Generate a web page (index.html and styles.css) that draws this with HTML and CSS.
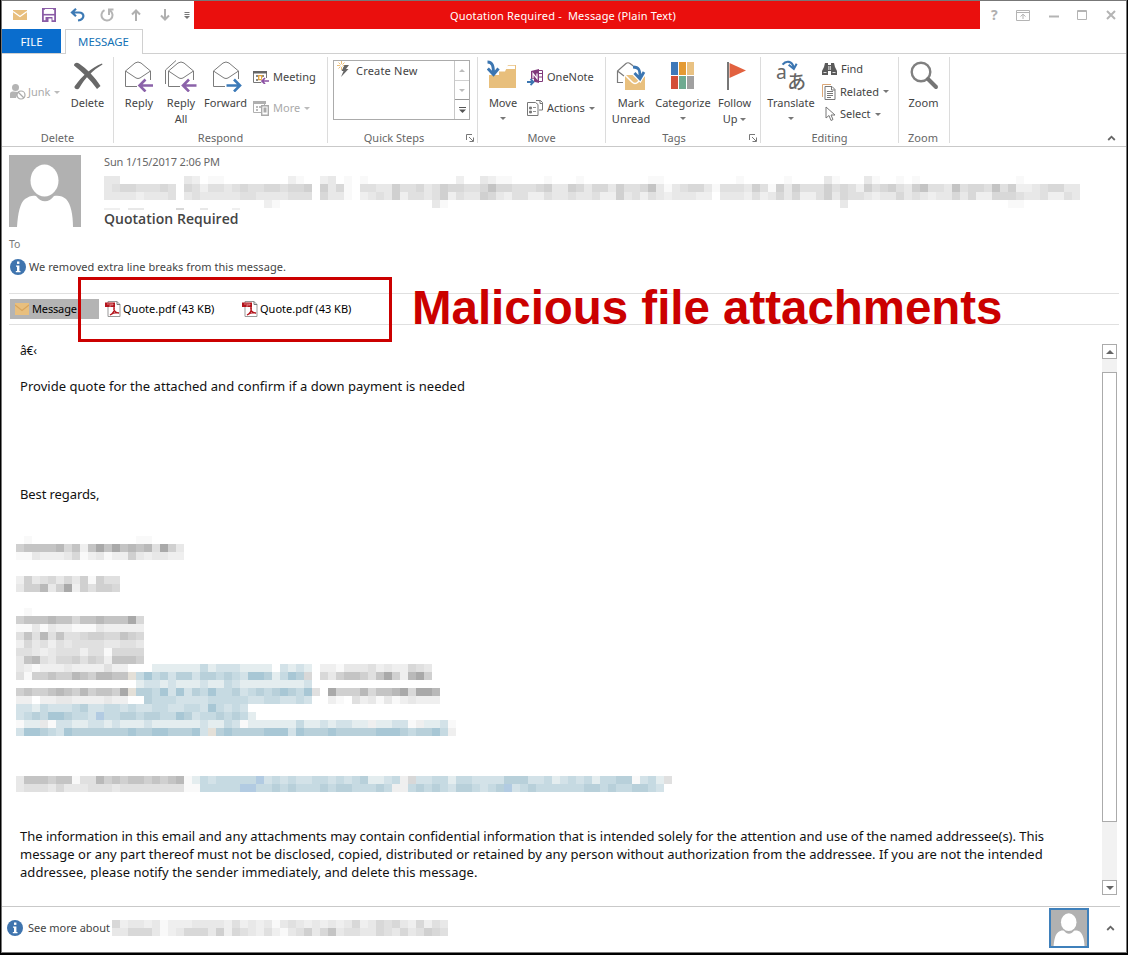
FILE: index.html
```html
<!DOCTYPE html>
<html lang="en">
<head>
<meta charset="utf-8">
<title>Quotation Required - Message</title>
<link rel="stylesheet" href="styles.css">
</head>
<body>
<svg class="defs" width="0" height="0">
  <symbol id="person" viewBox="0 0 72 72">
    <rect width="72" height="72" fill="#b1b1b1"/>
    <path d="M8 72 C9 58 11 48 16 44 C20 41 24 40 27 41 C32 48 40 48 45 41 C49 40 54 41 57 44 C62 49 64 60 64 72Z" fill="#fff"/>
    <ellipse cx="35.500" cy="25.500" rx="14" ry="16" fill="#fff"/>
  </symbol>
  <symbol id="info" viewBox="0 0 16 16">
    <circle cx="8" cy="8" r="8" fill="#3f74ae"/><rect x="7" y="2.500" width="2.400" height="2.400" fill="#fff"/>
    <path d="M6 6.500h3.400v5.500h1.100v1.200H5.800V12h1.200V7.700H6z" fill="#fff"/>
  </symbol>
  <symbol id="pdf" viewBox="0 0 16 16">
    <path d="M3 .5h9l3 3v12H3z" fill="#fff" stroke="#999"/><path d="M12 .5v3h3" fill="none" stroke="#777"/>
    <path d="M0 1.500h10v4.500H0z" fill="#b3141c"/><path d="M2 3h6v1H5v2" fill="none" stroke="#e9a9ab" stroke-width=".7"/>
    <path d="M5 14c3-1 5-5 4-8-1 4 2 6 5 6-3-1-6 0-9 2z" fill="none" stroke="#b3141c" stroke-width="1.300"/>
  </symbol>
  <symbol id="launch" viewBox="0 0 8 8"><path d="M.5 6V.5H6M3 3l4 4M7.500 3.500v4h-4" fill="none" stroke="#777"/></symbol>
  <symbol id="chev" viewBox="0 0 8 6"><path d="M.7 5 4 1.700 7.300 5" fill="none" stroke="#666" stroke-width="1.800"/></symbol>
</svg>

<div class="window">
  <header class="titlebar">
    <div class="quick">
      <svg width="14" height="12" viewBox="0 0 14 12"><path d="M0 1h14v10H0z" fill="#e8bf7e"/><path d="M0 2.500 7 7.500 14 2.500" fill="none" stroke="#fff" stroke-width="1.300"/></svg>
      <svg width="14" height="14" viewBox="0 0 14 14"><path d="M.9.9h12.200v12.200H.9z" fill="#fff" stroke="#8a5ca6" stroke-width="1.800"/><path d="M3 1h8v5H3z" fill="#fff"/><path d="M1 6.700h12" stroke="#8a5ca6" stroke-width="1.600"/><path d="M3.500 9h7v5h-7z" fill="#8a5ca6"/><path d="M6.500 10.500h3V14h-3z" fill="#fff"/></svg>
      <svg width="15" height="14" viewBox="0 0 15 14"><path d="M6 .8 2 4.500l4 3.700M2 4.500h7c6 0 6 7-1 8" fill="none" stroke="#3d7ab5" stroke-width="2.200"/></svg>
      <svg width="14" height="14" viewBox="0 0 14 14"><path d="M4.500 2.200A5.500 5.500 0 1 0 10 2.500M9 7V1.500h4.500" fill="none" stroke="#b5b5b5" stroke-width="2"/></svg>
      <svg width="10" height="12" viewBox="0 0 10 12"><path d="M5 12V1.500M1 5.500l4-4 4 4" fill="none" stroke="#b0b0b0" stroke-width="2"/></svg>
      <svg width="10" height="12" viewBox="0 0 10 12"><path d="M5 0v10.500M1 6.500l4 4 4-4" fill="none" stroke="#b0b0b0" stroke-width="2"/></svg>
      <svg width="6" height="7" viewBox="0 0 6 7"><path d="M.5 .5h5M.5 2.500h5" stroke="#777"/><path d="M0 4h6L3 7z" fill="#777"/></svg>
    </div>
    <div class="caption-bar">Quotation Required -&nbsp; Message (Plain Text)</div>
    <div class="controls">
      <b>?</b>
      <svg width="14" height="11" viewBox="0 0 14 11"><path d="M.5.500h13v10H.5zM.5 2.500h13M7 9V4.500M4.500 6.500 7 4.200l2.500 2.300" fill="none" stroke="#b4b4b4"/></svg>
      <svg width="10" height="10" viewBox="0 0 10 10"><path d="M0 6.500h10" stroke="#b4b4b4" stroke-width="2"/></svg>
      <svg width="10" height="10" viewBox="0 0 10 10"><path d="M.5.500h9v9h-9zM0 1.500h10" fill="none" stroke="#b4b4b4"/></svg>
      <svg width="10" height="10" viewBox="0 0 10 10"><path d="M1 1l8 8M9 1 1 9" stroke="#b4b4b4" stroke-width="2"/></svg>
    </div>
  </header>

  <nav class="tabs"><span class="file">FILE</span><span class="active">MESSAGE</span></nav>

  <section class="ribbon">
    <div class="group g-delete">
      <div class="tools">
        <div class="small junk dim">
          <svg width="16" height="16" viewBox="0 0 16 16"><circle cx="5.500" cy="3.500" r="3.500" fill="#b4b4b4"/><path d="M0 14V9.500C0 7 4 7 8 8L6 14z" fill="#b4b4b4"/><circle cx="11" cy="11" r="4" fill="#fff" stroke="#aaa" stroke-width="1.200"/><path d="m8 8 6 6" stroke="#aaa" stroke-width="1.200"/></svg>
          <span>Junk</span><i class="arrow"></i>
        </div>
        <div class="big w-delete">
          <svg width="32" height="32" viewBox="0 0 32 32"><path d="M2 5.500C2 3 5 2 7 3.500 15 9 23 17 28.500 26L25 29C18 19 10 12 2 5.500z" fill="#686868"/><path d="M30.500 4.500C21 10 13 18 7 28.500 5.500 30 2 29 2.500 26.500 10 16 19 8 30 3.500z" fill="#686868"/></svg>
          <span>Delete</span>
        </div>
      </div>
      <footer>Delete</footer>
    </div>

    <div class="group g-respond">
      <div class="tools">
        <div class="big w-reply">
          <svg width="32" height="32" viewBox="0 0 32 32"><path d="M14 26.500H2.500V11L12 3q3-2 6 0l9.500 8v9M2.500 11 13 18q2 1 4 0L27.500 11" fill="none" stroke="#7b7b7b"/><path d="M30 25.500H17M22.500 19.500l-6 6 6 6" fill="none" stroke="#8b62a9" stroke-width="2.600"/></svg>
          <span>Reply</span>
        </div>
        <div class="big w-replyall">
          <svg width="34" height="32" viewBox="0 0 34 32"><path d="M1.500 24V10L12 .5M16 26.500H4.500V11L14 3q3-2 6 0l9.500 8v9M4.500 11 15 18q2 1 4 0L29.500 11" fill="none" stroke="#7b7b7b"/><path d="M32.500 25.500h-13M25 19.500l-6 6 6 6" fill="none" stroke="#8b62a9" stroke-width="2.600"/></svg>
          <span>Reply<br>All</span>
        </div>
        <div class="big w-forward">
          <svg width="32" height="32" viewBox="0 0 32 32"><path d="M15 26.500H3.500V11L13 3q3-2 6 0l9.500 8v8M3.500 11 14 18q2 1 4 0L28.500 11" fill="none" stroke="#7b7b7b"/><path d="M16.500 25.500h13M24 19.500l6 6-6 6" fill="none" stroke="#3c7ab8" stroke-width="2.600"/></svg>
          <span>Forward</span>
        </div>
        <div class="stack two">
          <div class="small">
            <svg width="16" height="14" viewBox="0 0 16 14"><path d="M.5 1.500h13v11H.5z" fill="#fff" stroke="#777"/><path d="M0 1h14v2.500H0z" fill="#666"/><path d="M3 5h2v2H3zM9 5h2v2H9zM3 9h2v2H3z" fill="#888"/><path d="M5.700 5.700h3v4h-3z" fill="#fff" stroke="#e3a43d" stroke-width="1.300"/><path d="M9 8h7v6H8z" fill="#fff"/><path d="M16 11H9M12 8l-3 3 3 3" fill="none" stroke="#8b4fa3" stroke-width="1.700"/></svg>
            <span>Meeting</span>
          </div>
          <div class="small dim">
            <svg width="16" height="15" viewBox="0 0 16 15"><path d="M.5.500h11v11H.5z" fill="#fff" stroke="#b0b0b0"/><path d="M0 0h13v3H0z" fill="#b0b0b0"/><path d="M3 5h2v2H3zM6 5h2v2H6zM3 8h2v2H3z" fill="#bbb"/><path d="M8.700 4.700h6.600v9.600H8.700z" fill="#fff" stroke="#aaa" stroke-width="1.400"/><path d="M10.500 6.500h3v5h-3z" fill="#aaa"/></svg>
            <span>More</span><i class="arrow"></i>
          </div>
        </div>
      </div>
      <footer>Respond</footer>
    </div>

    <div class="group g-quick">
      <div class="tools">
        <div class="gallery">
          <div class="step">
            <svg width="16" height="18" viewBox="0 0 16 18"><path d="M4.500 0v9M0 4.500h9M1.500 1.500l6 6M7.500 1.500l-6 6" stroke="#eab86a" stroke-width=".9"/><circle cx="4.500" cy="4.500" r="1.500" fill="#fff"/><path d="M7.500 4h4.500l-3 4h2.500L4 16l2.500-6H4.500z" fill="#666"/></svg>
            <span>Create New</span>
          </div>
          <div class="scroller"><u class="up faint"></u><u class="down faint"></u><u class="more"><svg width="7" height="6" viewBox="0 0 7 6"><path d="M0 .5h7" stroke="#555"/><path d="M0 2.500h7L3.500 6z" fill="#555"/></svg></u></div>
        </div>
      </div>
      <footer>Quick Steps<svg class="launcher" width="8" height="8"><use href="#launch"/></svg></footer>
    </div>

    <div class="group g-move">
      <div class="tools">
        <div class="big w-move">
          <svg width="32" height="32" viewBox="0 0 32 32"><path d="M2 11.500h16l3-6.500h8v23H2z" fill="#e8bf7c"/><path d="M18.500 9 20.500 5.700H28V9z" fill="#fff"/><path d="M0 0h12v15H2V11H0z" fill="#fff"/><path d="M.5 2c5 0 6 4 6 12M.8 8.500l5.700 6 5-6" fill="none" stroke="#3c76b1" stroke-width="3"/></svg>
          <span>Move</span><i class="arrow"></i>
        </div>
        <div class="stack two">
          <div class="small">
            <svg width="17" height="17" viewBox="0 0 17 17"><path d="M4 2 12 0v14l-8-2z" fill="#80397b"/><path d="M12 1.500h3.500v11H12M12 4.500h3.500M12 8h3.500" fill="none" stroke="#80397b"/><path d="M6 9.500v-5l4 5v-5" fill="none" stroke="#fff" stroke-width="1.200"/><path d="M0 10h7v7H0z" fill="#fff"/><path d="M0 13h6M3.500 10l3 3-3 3" fill="none" stroke="#3c76b1" stroke-width="1.800"/></svg>
            <span>OneNote</span>
          </div>
          <div class="small">
            <svg width="17" height="17" viewBox="0 0 17 17"><path d="M.5 2.500h8l2.500 2v11H.5z" fill="#fff" stroke="#777"/><path d="M2.500 7h2v2h-2zM2.500 11h2v2h-2zM6 7.500h3M6 11.500h3" fill="#777" stroke="#777" stroke-width=".8"/><path d="M9 .5h4.500l2 2V10H12M13 .5v3h3" fill="none" stroke="#777"/></svg>
            <span>Actions</span><i class="arrow"></i>
          </div>
        </div>
      </div>
      <footer>Move</footer>
    </div>

    <div class="group g-tags">
      <div class="tools">
        <div class="big w-mark">
          <svg width="32" height="32" viewBox="0 0 32 32"><path d="M8 22.500H2.500V11L11 3.500q2-1.500 4 0l4 3M2.500 11 9 16" fill="none" stroke="#7b7b7b" stroke-width="1.200"/><path d="M10 15h20v15H10z" fill="#e9c07e"/><path d="M10 15l7 7q3 3 6 0l7-7" fill="none" stroke="#fff" stroke-width="1.500"/><path d="M18 7c6 0 7 3 7 10M19 13l6 6 4-7" fill="none" stroke="#fff" stroke-width="5"/><path d="M18 7c6 0 7 3 7 10M19.500 13l5.500 6 4-7" fill="none" stroke="#3c76b1" stroke-width="2.800"/></svg>
          <span>Mark<br>Unread</span>
        </div>
        <div class="big w-cat">
          <svg width="32" height="32" viewBox="0 0 32 32"><path d="M4 2h7v13H4z" fill="#3f79b9"/><path d="M12 2h7v13h-7z" fill="#e49a32"/><path d="M20 2h7v13h-7z" fill="#e9c283"/><path d="M4 16h7v13H4z" fill="#d35038"/><path d="M12 16h7v13h-7z" fill="#6eaa90"/><path d="M20 16h7v13h-7z" fill="#a0a0a0"/></svg>
          <span>Categorize</span><i class="arrow"></i>
        </div>
        <div class="big w-follow">
          <svg width="32" height="32" viewBox="0 0 32 32"><path d="M9 2v28" stroke="#777" stroke-width="2"/><path d="M10.500 3v15L27 10.500z" fill="#e2613f"/></svg>
          <span>Follow<br>Up <i class="arrow"></i></span>
        </div>
      </div>
      <footer>Tags<svg class="launcher" width="8" height="8"><use href="#launch"/></svg></footer>
    </div>

    <div class="group g-edit">
      <div class="tools">
        <div class="big w-trans">
          <svg width="32" height="34" viewBox="0 0 32 34"><path d="M7 5c4-5 10-4 12 3M13.500 5 19 9.500 22 4" fill="none" stroke="#3c76b1" stroke-width="2.200"/><text x="0" y="20" class="glyph-a">a</text><text x="12" y="30.500" class="glyph-ja">あ</text></svg>
          <span>Translate</span><i class="arrow"></i>
        </div>
        <div class="stack three">
          <div class="small">
            <svg width="15" height="14" viewBox="0 0 15 14"><path d="M3 1h3v2h3V1h3l1 4 2 4v4H9V9H6v4H0V9l2-4z" fill="#5a5a5a"/><path d="M6.800 4v4M8.300 4v4M1.500 10.500h3M10.500 10.500h3" stroke="#fff" stroke-width=".8"/></svg>
            <span>Find</span>
          </div>
          <div class="small">
            <svg width="14" height="16" viewBox="0 0 14 16"><path d="M.5 13V.5H9" fill="none" stroke="#dca878"/><path d="M3 2.500h7l3 3v10H3z" fill="#fff" stroke="#777"/><path d="M9.500 3v3H13M5 7.500h6M5 9.500h6M5 11.500h6M5 13.500h4" fill="none" stroke="#777"/></svg>
            <span>Related</span><i class="arrow"></i>
          </div>
          <div class="small">
            <svg class="cursor" width="11" height="16" viewBox="0 0 11 16"><path d="M1 1v11l3-2.500L6 14.500l2-1L6 9h4z" fill="#fff" stroke="#777"/></svg>
            <span>Select</span><i class="arrow"></i>
          </div>
        </div>
      </div>
      <footer>Editing</footer>
    </div>

    <div class="group g-zoom">
      <div class="tools">
        <div class="big">
          <svg width="32" height="32" viewBox="0 0 32 32"><circle cx="13" cy="12" r="9.300" fill="#fff" stroke="#808080" stroke-width="2.400"/><path d="m20 19 8 8" stroke="#757575" stroke-width="4" stroke-linecap="round"/></svg>
          <span>Zoom</span>
        </div>
      </div>
      <footer>Zoom</footer>
    </div>
    <svg class="collapse" width="9" height="6"><use href="#chev"/></svg>
  </section>

  <section class="message-head">
    <svg class="avatar" width="72" height="72"><use href="#person"/></svg>
    <div class="who">
      <time>Sun 1/15/2017 2:06 PM</time>
      <svg class="mosaic sender" data-name="sender"></svg>
      <h1>Quotation Required</h1>
    </div>
  </section>
  <div class="to">To</div>
  <div class="notice"><svg width="16" height="16"><use href="#info"/></svg><span>We removed extra line breaks from this message.</span></div>

  <div class="attachments">
    <span class="msg-tab"><svg width="14" height="12" viewBox="0 0 14 12"><path d="M0 0h14v12H0z" fill="#e8bf7e"/><path d="M0 2 7 7.500 14 2" fill="none" stroke="#d8a55c" stroke-width="1.200"/></svg>Message</span>
    <span class="pdf"><svg width="16" height="16"><use href="#pdf"/></svg>Quote.pdf (43 KB)</span>
    <span class="pdf"><svg width="16" height="16"><use href="#pdf"/></svg>Quote.pdf (43 KB)</span>
    <div class="callout-box"></div>
    <strong class="callout">Malicious file attachments</strong>
  </div>

  <main class="reading">
    <article>
      <p class="bom">â€‹</p>
      <p class="ask">Provide quote for the attached and confirm if a down payment is needed</p>
      <p class="bye">Best regards,</p>
      <svg class="mosaic signature" data-name="signature"></svg>
      <p class="legal">The information in this email and any attachments may contain confidential information that is intended solely for the attention and use of the named addressee(s). This<br><span class="second">message or any part thereof must not be disclosed, copied, distributed or retained by any person without authorization from the addressee. If you are not the intended</span><br><span class="third">addressee, please notify the sender immediately, and delete this message.</span></p>
    </article>
    <div class="scrollbar"><u class="up"></u><div class="thumb"></div><u class="down"></u></div>
  </main>

  <footer class="people">
    <svg width="16" height="16"><use href="#info"/></svg><span>See more about</span>
    <svg class="mosaic" data-name="contact"></svg>
    <svg class="mini" width="40" height="40" viewBox="0 0 40 40"><use href="#person" width="40" height="40"/><rect x="1" y="1" width="38" height="38" fill="none" stroke="#3f80bb" stroke-width="2"/></svg>
    <svg class="expand" width="9" height="6"><use href="#chev"/></svg>
  </footer>
</div>
<script src="mosaic.js"></script>
</body>
</html>
```
FILE: styles.css
```css
* { box-sizing: border-box; }
body { margin: 0; background: #000; font: 11px/16px "Noto Sans", "Open Sans", sans-serif; color: #444; overflow: hidden; }
svg { display: block; flex: none; }
.defs { position: absolute; }
.window { width: 1126px; height: 953px; margin-left: 1px; border: 1px solid #777; background: #fff; display: flex; flex-direction: column; }

.titlebar { height: 28px; display: flex; flex: none; }
.quick { width: 192px; padding-left: 3px; display: grid; grid-template-columns: repeat(6, 29px) 15px; align-items: center; justify-items: center; }
.caption-bar { width: 786px; background: #ea0f0d; color: #fff; text-align: center; line-height: 30px; letter-spacing: .17px; padding-right: 48px; }
.controls { flex: 1; display: flex; align-items: center; justify-content: space-between; padding: 0 10px 0 11px; color: #b0b0b0; font-size: 14px; }

.tabs { height: 25px; flex: none; display: flex; border-bottom: 1px solid #d0d0d0; line-height: 25px; text-align: center; font-size: 11.400px; }
.file { width: 59px; background: #0a6dcd; color: #fff; }
.active { width: 78px; height: 25px; margin-left: 4px; background: #fff; border: 1px solid #d0d0d0; border-bottom: 0; color: #1271b5; line-height: 23px; padding-right: 1px; }

.ribbon { height: 93px; flex: none; display: flex; border-bottom: 1px solid #c9c9c9; position: relative; }
.group { height: 86px; margin-top: 3px; border-right: 1px solid #dcdcdc; position: relative; }
.tools { height: 73px; padding-top: 3px; display: flex; }
.group footer { line-height: 16px; text-align: center; color: #666; }
.g-delete { width: 112px; } .g-respond { width: 214px; } .g-quick { width: 150px; } .g-move { width: 128px; }
.g-tags { width: 155px; } .g-edit { width: 138px; } .g-zoom { width: 51px; }
.g-zoom .big { width: 49px; } .g-zoom footer { padding-right: 2px; }
.g-quick footer { padding-right: 17px; } .g-tags footer { padding-right: 18px; }
.launcher { position: absolute; right: 3px; bottom: 1px; }
.big { display: flex; flex-direction: column; align-items: center; text-align: center; }
.big > span { margin-top: 3px; white-space: nowrap; }
.big > .arrow { margin-top: 6px; }
.arrow { display: inline-block; border: 3px solid transparent; border-top-color: #777; border-bottom: 0; }
.small { display: flex; align-items: center; height: 18px; white-space: nowrap; }
.small svg { margin-right: 3px; }
.small .arrow { margin-left: 4px; }
.dim { color: #aaa; }
.dim .arrow { border-top-color: #bbb; }
.junk { width: 61px; margin: 23px 0 0 8px; }
.junk svg { margin-right: 2px; }
.w-delete { width: 33px; }
.w-reply { width: 46px; margin-left: 2px; } .w-replyall { width: 38px; } .w-forward { width: 51px; }
.stack { display: flex; flex-direction: column; }
.two { gap: 13px; padding-top: 8px; }
.g-respond .stack { margin-left: 2px; }
.g-respond .small svg { margin-right: 4px; }
.gallery { width: 137px; height: 60px; margin-left: 5px; border: 1px solid #ababab; display: flex; justify-content: space-between; }
.step { display: flex; padding-left: 3px; }
.step svg { margin-right: 3px; }
.step span { padding-top: 2px; letter-spacing: .2px; }
.scroller { width: 15px; display: flex; flex-direction: column; border-left: 1px solid #c8c8c8; }
u { flex: 1; display: flex; align-items: center; justify-content: center; text-decoration: none; }
u.up::before { content: ""; border: 4px solid transparent; border-bottom-color: #666; border-top: 0; }
u.down::before { content: ""; border: 4px solid transparent; border-top-color: #666; border-bottom: 0; }
u.faint::before { border-width: 3px; border-top-width: 0; border-bottom-color: #bbb; }
u.down.faint::before { border-width: 3px 3px 0; border-top-color: #bbb; }
u.faint { border-bottom: 1px solid #d0d0d0; }
u.down.faint { border-bottom-color: #999; }
.w-move { width: 42px; margin-left: 4px; } .g-move .stack { margin-left: 3px; }
.w-mark { width: 48px; margin-left: 1px; } .w-cat { width: 56px; } .w-follow { width: 47px; }
.w-follow .arrow { margin-bottom: 2px; }
.w-trans { width: 54px; margin-left: 3px; }
.w-trans svg { height: 32px; overflow: visible; }
.three { gap: 4.500px; padding: 0 0 0 4px; }
.three svg { margin-right: 4px; }
.three .cursor { margin: 0 4px 0 3px; }
.glyph-a { font: 20.500px "Noto Sans", sans-serif; fill: #666; }
.glyph-ja { font: 500 20px "Noto Sans CJK JP", sans-serif; fill: #666; }
.collapse { position: absolute; right: 10px; bottom: 5px; }

.message-head { display: flex; padding: 8px 0 0 7px; height: 88px; flex: none; }
.who { margin-left: 23px; }
.who time { display: block; height: 21px; line-height: 14px; color: #666; letter-spacing: -.14px; }
.sender { height: 34px; }
.who h1 { margin: -1px 0 0; font: 600 14px/20px "Open Sans", "Noto Sans", sans-serif; letter-spacing: .03px; }
.to { padding-left: 7px; height: 22px; line-height: 18px; color: #777; font-size: 10.500px; }
.notice { display: flex; align-items: center; height: 20px; padding-left: 8px; letter-spacing: .05px; }
.notice span { margin-left: 3px; }

.attachments { height: 32px; flex: none; margin: 16px 0 0 7px; width: 1110px; border: solid #e0e0e0; border-width: 1px 0; display: flex; align-items: center; color: #000; position: relative; }
.msg-tab { width: 89px; height: 20px; line-height: 20px; margin-left: 1px; background: #b4b4b4; display: flex; align-items: center; padding-left: 5px; gap: 3px; letter-spacing: -.15px; }
.pdf { display: flex; align-items: center; width: 137px; margin-left: 6px; gap: 2px; }
.pdf + .pdf { margin-left: 0; }
.callout-box { position: absolute; left: 69px; top: -17px; width: 314px; height: 65px; border: 3px solid #cb0000; }
.callout { position: absolute; left: 403px; top: -14px; font: bold 47.450px/56px "Liberation Sans", Arial, sans-serif; color: #cb0000; white-space: nowrap; }

.reading { display: flex; height: 581px; flex: none; font-size: 13px; line-height: 18px; color: #111; }
article { width: 1099px; padding: 17px 0 0 14px; display: flex; flex-direction: column; }
article p { margin: 0 0 0 4px; white-space: nowrap; }
.bom { font-size: 12px; letter-spacing: -.2px; }
article .ask { margin-top: 17px; letter-spacing: .025px; }
article .bye { margin-top: 90px; letter-spacing: -.1px; }
.signature { margin-top: 33px; }
article .legal { margin-top: 35px; letter-spacing: -.022px; }
.second { letter-spacing: .009px; }
.third { letter-spacing: .047px; }
.scrollbar { width: 15px; height: 551px; margin: 19px 0 0 1px; background: #f2f2f2; display: flex; flex-direction: column; }
.scrollbar u { flex: none; height: 15px; background: #fff; border: 1px solid #ababab; }
.thumb { height: 450px; margin: 13px 0 auto; background: #fff; border: 1px solid #ababab; }

.people { flex: 1; border-top: 1px solid #c9c9c9; margin-right: 6px; display: flex; align-items: center; padding: 0 0 3px 5px; }
.people span { margin: 0 3px 0 5px; width: 81px; white-space: nowrap; }
.mini { margin-left: auto; }
.expand { margin: 0 5px 0 17px; }
```
FILE: mosaic.js
```javascript
const CELL = 8;
const TONES = {
  1: '#f9f9f9', 2: '#efefef', 3: '#e8e8e8', 4: '#e0e0e0', 5: '#d8d8d8', 6: '#d0d0d0', 7: '#c4c4c4', 8: '#b9b9b9', 9: '#a9a9a9',
  a: '#e4edef', b: '#d3e2e8', c: '#c6dae2', d: '#b8d0da', e: '#a8c7d5', f: '#b2cbe2', h: '#e4e0d8'
};

// Each row lists its runs as "column:tones".
const GRIDS = {
  sender: [
    '0:33 10:32 13:11 23:21 27:23 30:1 32:1 44:2 47:3211 55:1 59:1 68:11 79:1 85:1 90:31 95:31 99:1 101:1 114:1',
    '0:345544454 10:5424434544554556 27:635 30:1 32:44336445346554457554445633653553644573134553 76:1 77:444364163644464542645643674437455474622345533',
    '0:333323334 10:3433333443333444 27:5331 32:23436244346243365324422433433422634243233322 77:333242353522463544323353432335352255543342243',
    '20:21 41:31 92:3 113:11',
    '0:22 3:33 9:5 12:3 16:2'
  ],
  signature: [
    '1:1 15:11', '0:677778572797978784963', '0:113222351231226323322', '', '',
    '0:2634535361644', '0:3668369264665', '', '',
    '1:1', '0:6777877577877795', '0:1131322111322222', '0:4748474456655765', '0:2534243444433443', '0:4432344424415555', '0:3784355646527776',
    '0:32122232222422 17:aaaaaacabbbaaaa 33:baba 38:221 41:33342322543',
    '0:41667668768877 14:h 15:cecdbddbddcdcbeedaced5 38:536 41:77647962896',
    '15:abbabaaabaacbaaaaaaaab',
    '0:67667876867769 14:h 15:ddcebebdceccdbcdcdedce 37:4 39:96 41:668577895998',
    '0:22.22332222322 16:dcccbbbbcccccbbccbbcb 39:21 42:42313123222',
    '0:bbacbbbcdbbccbcbbccbbccbecbcb', '0:bcdceedccbfccddcddccedbccdcdc 29:a',
    '0:1aa31bbaabbabaaabaaaaaabaacb1aaaaaacaabab 41:baa2aabb12aab1',
    '0:beedcbedddddddeddeeddde 23:bh 25:deddddeeebeddded 41:ddddeeedcddec2',
    '', '', '', '', '',
    '0:3777677 7:1 8:4486767767678 21:1a 23:cbcccccfbcbcbbccbc 41:bcdaabc25bbccaccbbbbdddbbcabcbcaccdd1bca4',
    '0:344435333444344444444 21:11 23:cccccffccdcdcccdcd 41:dcccdc22cdcdcbddcbcdfbcdccccccddcdccddcb'
  ],
  contact: [
    '0:523323122233332423231343232323523545325243',
    '0:335553123555362543242134635734433543534654'
  ]
};

function drawMosaic(svg) {
  const rows = GRIDS[svg.dataset.name];
  let cols = 0;
  svg.setAttribute('shape-rendering', 'crispEdges');
  rows.forEach((row, y) => row.split(' ').filter(Boolean).forEach(run => {
    const [start, tones] = run.split(':');
    [...tones].forEach((key, i) => {
      const x = Number(start) + i;
      cols = Math.max(cols, x + 1);
      if (!TONES[key]) return;
      const cell = document.createElementNS('http://www.w3.org/2000/svg', 'rect');
      cell.setAttribute('x', x * CELL);
      cell.setAttribute('y', y * CELL);
      cell.setAttribute('width', CELL);
      cell.setAttribute('height', CELL);
      cell.setAttribute('fill', TONES[key]);
      svg.append(cell);
    });
  }));
  svg.setAttribute('width', cols * CELL);
  svg.setAttribute('height', rows.length * CELL);
}

document.querySelectorAll('.mosaic').forEach(drawMosaic);
```
